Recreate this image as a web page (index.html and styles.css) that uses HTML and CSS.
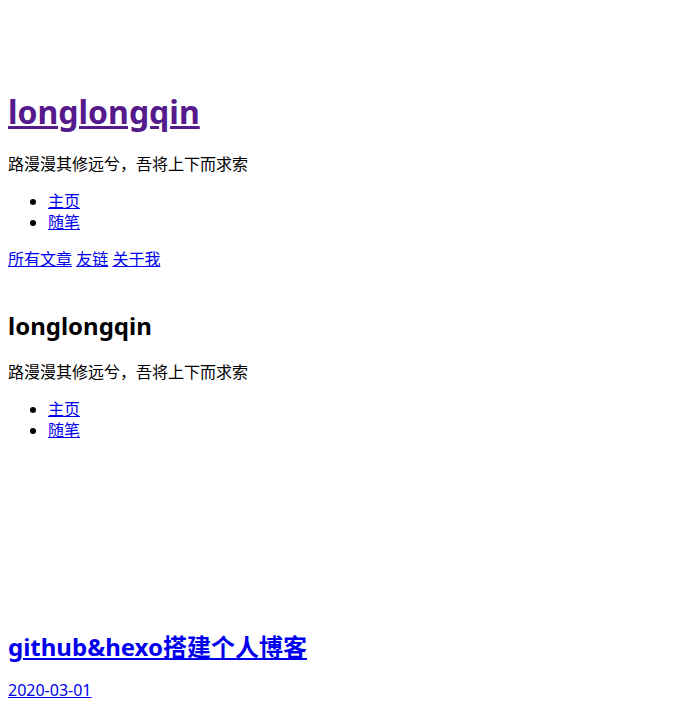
FILE: index.html
```html
<!DOCTYPE html>
<html lang="zh-CN">
<head>
<meta charset="utf-8">
<title>longlongqin</title>
<link rel="stylesheet" href="styles.css">
</head>
<body>
<header class="site-header">
  <h1 class="site-title"><a class="visited" href="#">longlongqin</a></h1>
  <p class="line">路漫漫其修远兮，吾将上下而求索</p>
  <ul class="menu">
    <li><a href="#">主页</a></li>
    <li><a href="#">随笔</a></li>
  </ul>
  <p class="line"><a href="#">所有文章</a> <a href="#">友链</a> <a href="#">关于我</a></p>
</header>
<aside class="sidebar">
  <h2 class="side-title">longlongqin</h2>
  <p class="line">路漫漫其修远兮，吾将上下而求索</p>
  <ul class="menu">
    <li><a href="#">主页</a></li>
    <li><a href="#">随笔</a></li>
  </ul>
</aside>
<main class="posts">
  <article class="post">
    <h2 class="post-title"><a href="#">github&amp;hexo搭建个人博客</a></h2>
    <p class="date"><a href="#">2020-03-01</a></p>
  </article>
</main>
</body>
</html>
```
FILE: styles.css
```css
body {
  margin: 8px;
  font-family: "Noto Sans", "Noto Sans CJK SC", sans-serif;
  font-size: 16px;
  line-height: 21px;
  color: #000;
  background: #fff;
}
a { color: #0000ee; }
a.visited { color: #551a8b; }
.site-header { padding-top: 62px; }
.site-title {
  font-size: 32px;
  line-height: 42px;
  margin: 21px 0;
}
.line { margin: 16px 0; }
.menu {
  margin: 16px 0;
  padding-left: 40px;
}
.sidebar { padding-top: 4px; }
.side-title {
  font-size: 24px;
  line-height: 32px;
  margin: 20px 0;
}
.posts { padding-top: 154px; }
.post-title {
  font-size: 24px;
  line-height: 32px;
  margin: 20px 0 17px;
}
.date { margin: 0; }
```
